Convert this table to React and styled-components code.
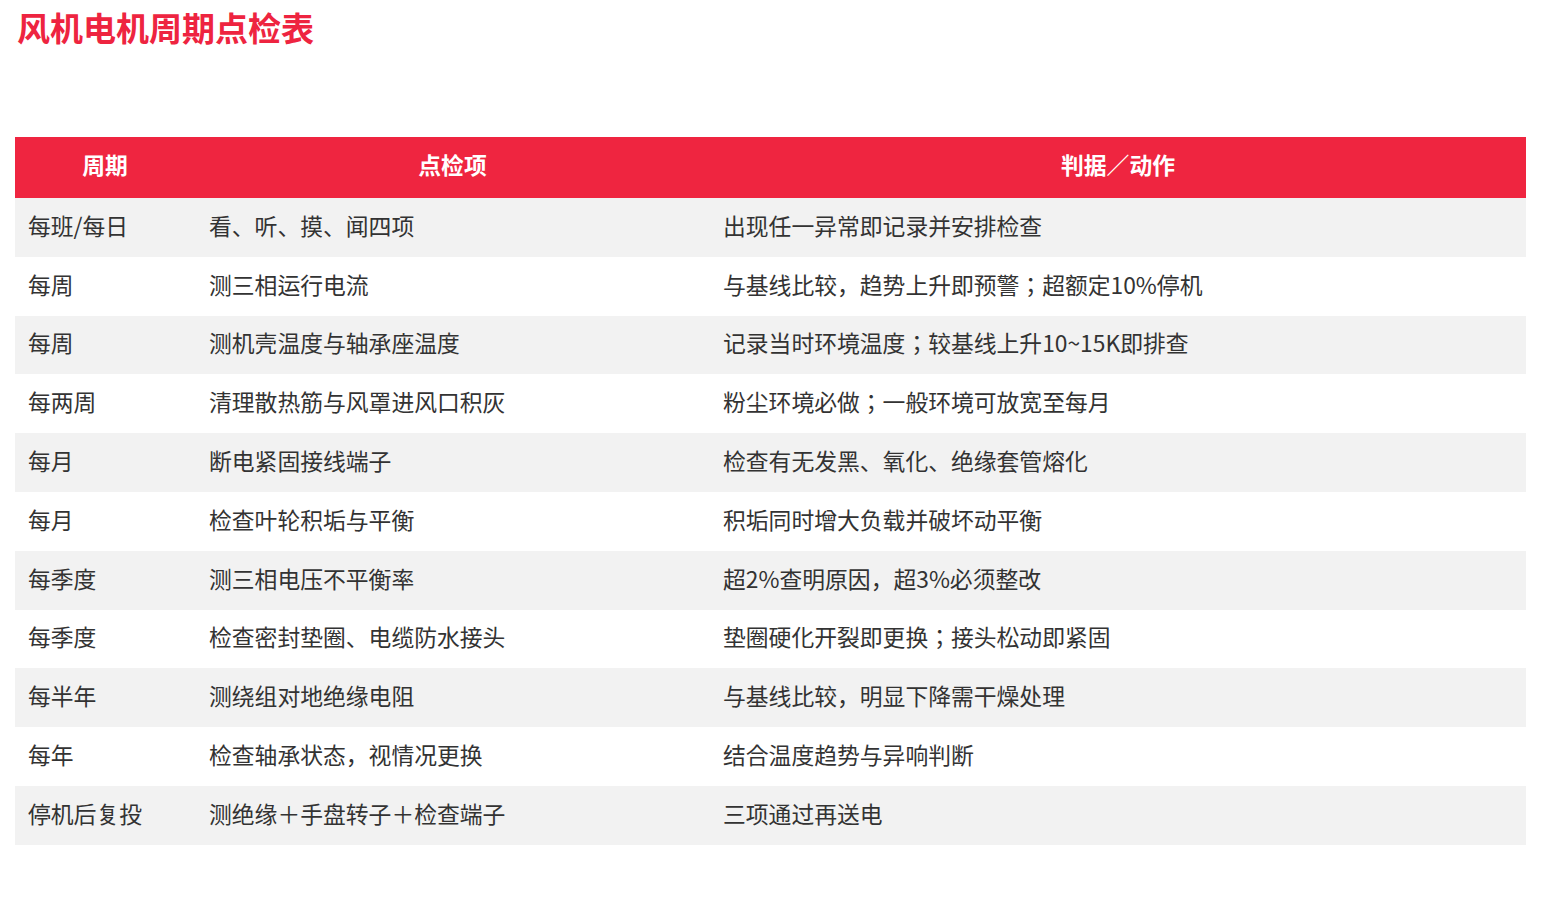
import React from 'react'
import styled, { createGlobalStyle } from 'styled-components'

const GlobalStyle = createGlobalStyle`
    html, body {
        margin: 0;
        padding: 0;
        background: #ffffff;
    }
    body {
        font-family: "Noto Sans CJK JP", "Noto Sans CJK SC", "Noto Sans", sans-serif;
    }
`

const Page = styled.div`
    width: 1541px;
    padding: 5px 15px 0 15px;
    box-sizing: border-box;
`

const Title = styled.h1`
    margin: 0 0 0 2px;
    font-size: 33px;
    line-height: 44px;
    font-weight: 700;
    color: #ee2440;
`

const Table = styled.table`
    margin-top: 88px;
    width: 1511px;
    border-collapse: collapse;
    table-layout: fixed;
    font-size: 22.8px;
    line-height: 30px;
    color: #333333;
`

const HeadCell = styled.th`
    height: 61px;
    padding: 0 0 5px 0;
    box-sizing: border-box;
    background: #ef2540;
    color: #ffffff;
    font-weight: 700;
    text-align: center;
    vertical-align: middle;
`

const Row = styled.tr`
    background: ${p => (p.$shade ? '#f2f2f2' : '#ffffff')};
`

const Cell = styled.td`
    height: 58.8px;
    box-sizing: border-box;
    padding: 0 0 3px ${p => p.$pad || 13}px;
    vertical-align: middle;
    white-space: nowrap;
    font-weight: 400;
`

const rows = [
    ['每班/每日', '看、听、摸、闻四项', '出现任一异常即记录并安排检查'],
    ['每周', '测三相运行电流', '与基线比较，趋势上升即预警；超额定10%停机'],
    ['每周', '测机壳温度与轴承座温度', '记录当时环境温度；较基线上升10~15K即排查'],
    ['每两周', '清理散热筋与风罩进风口积灰', '粉尘环境必做；一般环境可放宽至每月'],
    ['每月', '断电紧固接线端子', '检查有无发黑、氧化、绝缘套管熔化'],
    ['每月', '检查叶轮积垢与平衡', '积垢同时增大负载并破坏动平衡'],
    ['每季度', '测三相电压不平衡率', '超2%查明原因，超3%必须整改'],
    ['每季度', '检查密封垫圈、电缆防水接头', '垫圈硬化开裂即更换；接头松动即紧固'],
    ['每半年', '测绕组对地绝缘电阻', '与基线比较，明显下降需干燥处理'],
    ['每年', '检查轴承状态，视情况更换', '结合温度趋势与异响判断'],
    ['停机后复投', '测绝缘＋手盘转子＋检查端子', '三项通过再送电'],
]

export default function App() {
    return (
        <Page>
            <GlobalStyle />
            <Title>风机电机周期点检表</Title>
            <Table>
                <colgroup>
                    <col style={{ width: 180 }} />
                    <col style={{ width: 515 }} />
                    <col style={{ width: 816 }} />
                </colgroup>
                <thead>
                    <tr>
                        <HeadCell>周期</HeadCell>
                        <HeadCell>点检项</HeadCell>
                        <HeadCell>判据／动作</HeadCell>
                    </tr>
                </thead>
                <tbody>
                    {rows.map((r, i) => (
                        <Row key={i} $shade={i % 2 === 0}>
                            <Cell>{r[0]}</Cell>
                            <Cell $pad={14}>{r[1]}</Cell>
                            <Cell $pad={13}>{r[2]}</Cell>
                        </Row>
                    ))}
                </tbody>
            </Table>
        </Page>
    )
}
